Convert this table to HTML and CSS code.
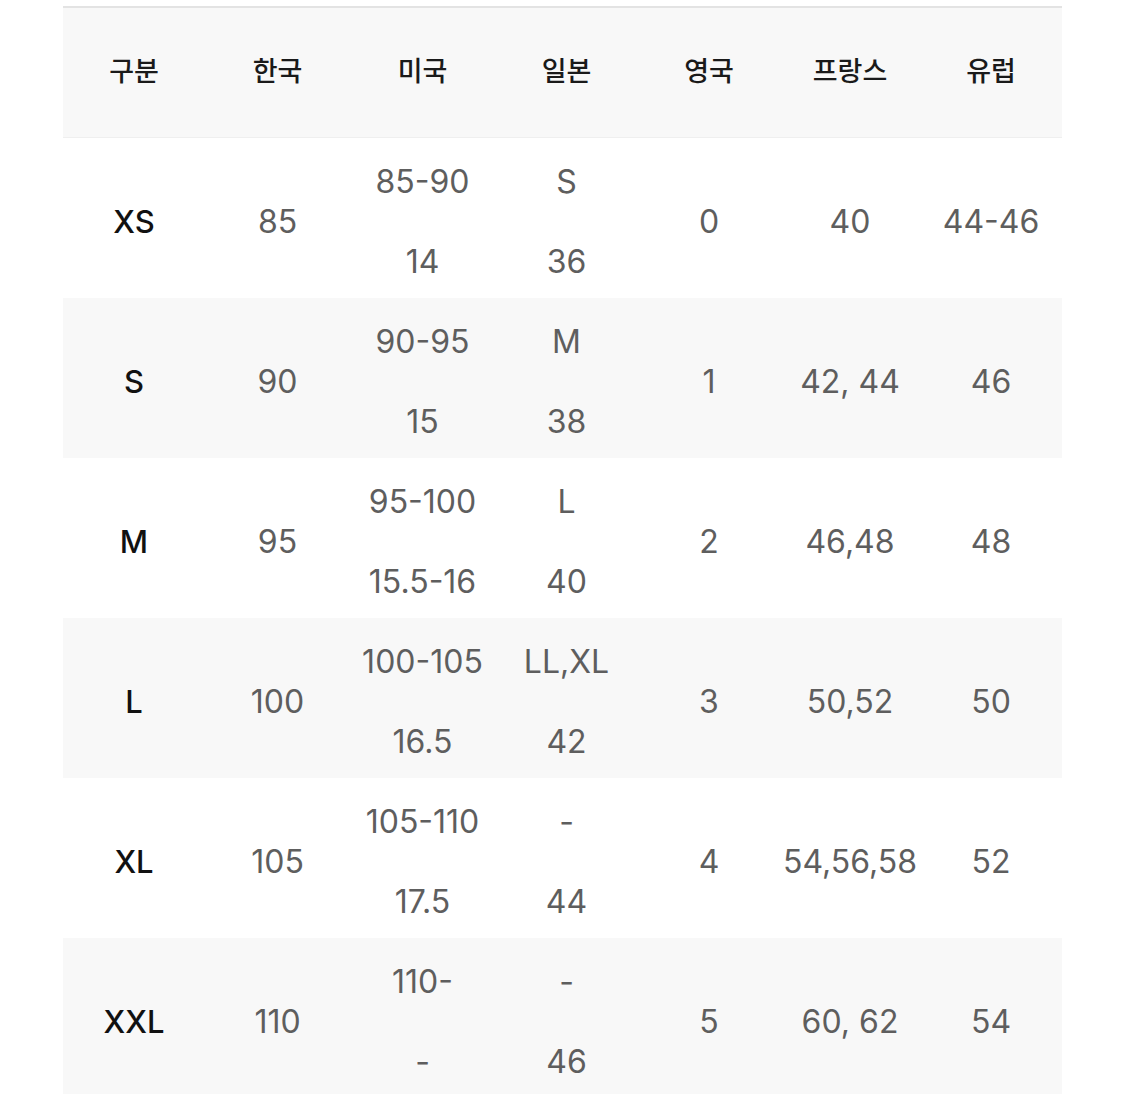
FILE: index.html
```html
<!DOCTYPE html>
<html lang="ko">
<head>
<meta charset="utf-8">
<link rel="stylesheet" href="styles.css">
</head>
<body>
<table class="size-table">
  <colgroup>
    <col class="c1"><col class="c2"><col class="c3"><col class="c4"><col class="c5"><col class="c6"><col class="c7">
  </colgroup>
  <thead>
    <tr><th>구분</th><th>한국</th><th>미국</th><th>일본</th><th>영국</th><th>프랑스</th><th>유럽</th></tr>
  </thead>
  <tbody>
    <tr><td class="lbl">XS</td><td>85</td><td>85-90<br><br>14</td><td>S<br><br>36</td><td>0</td><td>40</td><td>44-46</td></tr>
    <tr class="alt"><td class="lbl">S</td><td>90</td><td>90-95<br><br>15</td><td>M<br><br>38</td><td>1</td><td>42, 44</td><td>46</td></tr>
    <tr><td class="lbl">M</td><td>95</td><td>95-100<br><br>15.5-16</td><td>L<br><br>40</td><td>2</td><td>46,48</td><td>48</td></tr>
    <tr class="alt"><td class="lbl">L</td><td>100</td><td>100-105<br><br>16.5</td><td>LL,XL<br><br>42</td><td>3</td><td>50,52</td><td>50</td></tr>
    <tr><td class="lbl">XL</td><td>105</td><td>105-110<br><br>17.5</td><td>-<br><br>44</td><td>4</td><td>54,56,58</td><td>52</td></tr>
    <tr class="alt"><td class="lbl">XXL</td><td>110</td><td>110-<br><br>-</td><td>-<br><br>46</td><td>5</td><td>60, 62</td><td>54</td></tr>
  </tbody>
</table>
</body>
</html>
```
FILE: styles.css
```css
html, body {
  margin: 0;
  padding: 0;
  background: #ffffff;
}
body {
  padding: 6px 0 0 63px;
}
.size-table {
  border-collapse: collapse;
  table-layout: fixed;
  width: 999px;
  font-family: "Inter", "Liberation Sans", "Noto Sans CJK KR", sans-serif;
}
.c1 { width: 142px; }
.c2 { width: 145px; }
.c3 { width: 145px; }
.c4 { width: 143px; }
.c5 { width: 142px; }
.c6 { width: 140px; }
.c7 { width: 142px; }
.size-table thead tr {
  background: #f8f8f8;
  border-top: 2px solid #e3e3e3;
  border-bottom: 1px solid #efefef;
}
.size-table th {
  height: 123px;
  padding: 0 0 6px;
  font-family: "Noto Sans CJK KR", sans-serif;
  font-weight: 500;
  font-size: 27px;
  color: #1a1a1a;
  text-align: center;
  vertical-align: middle;
}
.size-table td {
  height: 152px;
  padding: 8px 0 0;
  font-size: 32px;
  font-weight: 400;
  line-height: 40px;
  color: #5e5e5e;
  text-align: center;
  vertical-align: middle;
  white-space: nowrap;
}
.size-table tr.alt {
  background: #f8f8f8;
}
.size-table td.lbl {
  font-weight: 500;
  color: #111111;
  font-size: 31px;
}
```
